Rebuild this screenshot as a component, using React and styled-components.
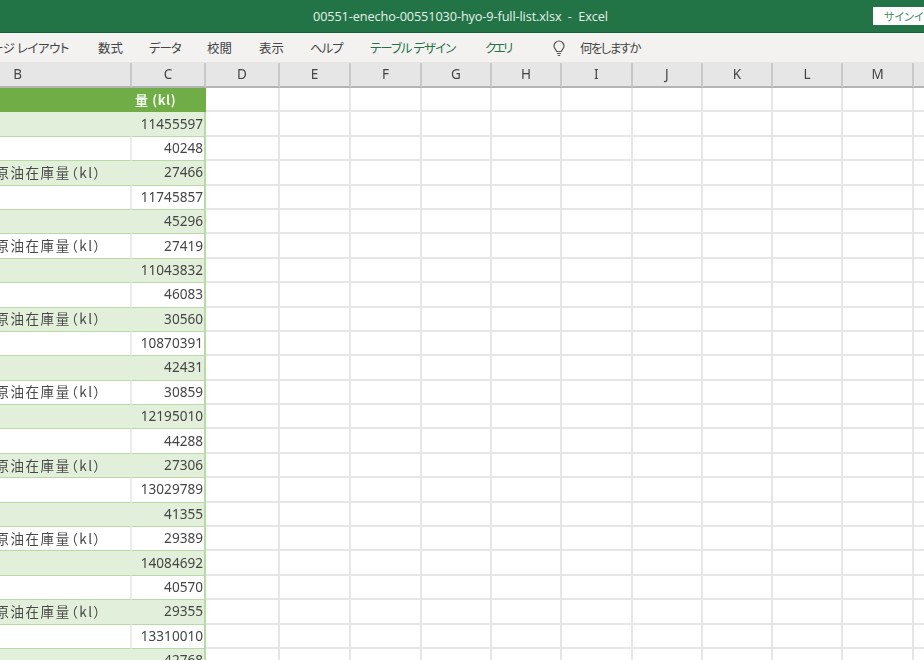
import React from "react";
import styled, { createGlobalStyle } from "styled-components";

const Global = createGlobalStyle`
  html, body { margin: 0; padding: 0; background: #fff; overflow: hidden; }
  body { font-family: "Noto Sans CJK JP", "Noto Sans", sans-serif; }
`;

const Page = styled.div`
  width: 924px;
  height: 660px;
  overflow: hidden;
  display: flex;
  flex-direction: column;
  filter: blur(0.45px);
`;

const TitleBar = styled.header`
  height: 33px;
  flex: none;
  box-sizing: border-box;
  background: #227447;
  border-bottom: 1px solid #0f6236;
  display: flex;
  align-items: center;
  color: #e6f0ea;
  font-family: "Open Sans", "Noto Sans", sans-serif;
  font-size: 12.7px;
  position: relative;
`;

const TitleText = styled.div`
  width: 100%;
  padding-left: 313px;
  box-sizing: border-box;
  white-space: pre;
  letter-spacing: -0.1px;
`;

const SignIn = styled.div`
  position: absolute;
  left: 873px;
  top: 7px;
  width: 70px;
  height: 18px;
  background: #fff;
  color: #4b8a68;
  font-size: 11px;
  font-feature-settings: "palt";
  line-height: 18px;
  padding-left: 11px;
  box-sizing: border-box;
  white-space: nowrap;
  font-family: "Noto Sans CJK JP", sans-serif;
`;

const Ribbon = styled.nav`
  height: 30px;
  flex: none;
  background: #f3f2f1;
  display: flex;
  align-items: center;
  overflow: hidden;
  font-size: 12.4px;
  font-feature-settings: "palt";
  color: #444;
  box-shadow: inset 0 -1px 0 #e6e5e3;
`;

const Tab = styled.span`
  flex: none;
  width: ${p => p.$w}px;
  color: ${p => (p.$green ? "#217346" : "#444")};
  letter-spacing: ${p => p.$track || 0}px;
  white-space: nowrap;
`;

const TabClip = styled.span`
  flex: none;
  width: 98px;
  display: flex;
  justify-content: flex-end;
  padding-right: 29px;
  box-sizing: border-box;
  letter-spacing: -0.4px;
  white-space: nowrap;
  overflow: hidden;
`;

const Bulb = styled.svg`
  flex: none;
  width: 14px;
  height: 17px;
  margin-right: 14px;
  fill: none;
  stroke: #555;
  stroke-width: 1.2;
`;

const Row = styled.div`
  display: grid;
  grid-template-columns: 132px 74px 74px 71px 71px 70px 70px 70.5px 70.5px 70px 70px 71px 70px;
  height: ${p => p.$h}px;
  flex: none;
`;

const ColHead = styled.div`
  box-sizing: border-box;
  background: #e6e6e6;
  border-right: 2px solid #c8c8c8;
  border-bottom: 2px solid #b4b4b4;
  color: #444;
  font-family: "Noto Sans", sans-serif;
  font-size: 13.5px;
  text-align: center;
  line-height: 23px;
`;

const ClippedHead = styled(ColHead)`
  text-align: right;
  padding-right: 108px;
`;

const Label = styled.div`
  box-sizing: border-box;
  background: ${p => (p.$tint ? "#e2efda" : "#fff")};
  border-bottom: 1.6px solid #b9d9a6;
  border-right: 2px solid ${p => (p.$tint ? "#e2efda" : "#ececec")};
  display: flex;
  justify-content: flex-end;
  align-items: center;
  overflow: hidden;
  white-space: nowrap;
  padding-right: 28px;
  padding-bottom: 2px;
  font-size: 13.5px;
  font-feature-settings: "palt";
  letter-spacing: 1.6px;
  color: #484848;
`;

const Amount = styled.div`
  box-sizing: border-box;
  background: ${p => (p.$tint ? "#e2efda" : "#fff")};
  border-bottom: 1.6px solid #b9d9a6;
  border-right: 2px solid #b9d9a6;
  display: flex;
  justify-content: flex-end;
  align-items: center;
  padding-right: 1px;
  padding-bottom: 2px;
  font-family: "Noto Sans", sans-serif;
  font-size: 13.6px;
  color: #454545;
`;

const HeadFill = styled.div`
  background: #70ad47;
`;

const HeadAmount = styled.div`
  background: #70ad47;
  color: #f3f8ee;
  font-size: 13px;
  font-weight: 700;
  letter-spacing: 0.6px;
  display: flex;
  align-items: center;
  padding-left: 3px;
  padding-bottom: 2px;
  white-space: nowrap;
`;

const Blank = styled.div`
  box-sizing: border-box;
  background: #fff;
  border-right: 2px solid #e6e6e6;
  border-bottom: 2px solid #e6e6e6;
`;

const Sheet = styled.main`
  flex: 1;
  min-height: 0;
  overflow: hidden;
  display: flex;
  flex-direction: column;
`;

const cols = ["C", "D", "E", "F", "G", "H", "I", "J", "K", "L", "M", "N"];
const blanks = cols.slice(1);
const values = [
  11455597, 40248, 27466, 11745857, 45296, 27419, 11043832, 46083, 30560, 10870391, 42431, 30859,
  12195010, 44288, 27306, 13029789, 41355, 29389, 14084692, 40570, 29355, 13310010, 42768,
];

export default function App() {
  return (
    <Page>
      <Global />
      <TitleBar>
        <TitleText>00551-enecho-00551030-hyo-9-full-list.xlsx  -  Excel</TitleText>
        <SignIn>サインイン</SignIn>
      </TitleBar>
      <Ribbon>
        <TabClip>ページ レイアウト</TabClip>
        <Tab $w={51}>数式</Tab>
        <Tab $w={58} $track={-1}>データ</Tab>
        <Tab $w={52}>校閲</Tab>
        <Tab $w={51}>表示</Tab>
        <Tab $w={60} $track={-1}>ヘルプ</Tab>
        <Tab $w={115} $green $track={-0.9}>テーブル デザイン</Tab>
        <Tab $w={67} $green $track={-2.4}>クエリ</Tab>
        <Bulb viewBox="0 0 14 17">
          <path d="M4.6 11.5C4.2 9.6 2 8.6 2 6a5 5 0 0 1 10 0c0 2.6-2.2 3.6-2.6 5.5z" />
          <path d="M5 13.5h4M5.8 15.5h2.4" />
        </Bulb>
        <Tab $w={80} $track={-1.5}>何をしますか</Tab>
      </Ribbon>
      <Sheet>
        <Row $h={25}>
          <ClippedHead>B</ClippedHead>
          {cols.map(c => (
            <ColHead key={c}>{c}</ColHead>
          ))}
        </Row>
        <Row $h={24.4}>
          <HeadFill />
          <HeadAmount>量 (kl)</HeadAmount>
          {blanks.map(c => (
            <Blank key={c} />
          ))}
        </Row>
        {values.map((v, i) => (
          <Row $h={24.4} key={i}>
            <Label $tint={i % 2 === 0}>{i % 3 === 2 ? "原油在庫量（kl）" : ""}</Label>
            <Amount $tint={i % 2 === 0}>{v}</Amount>
            {blanks.map(c => (
              <Blank key={c} />
            ))}
          </Row>
        ))}
      </Sheet>
    </Page>
  );
}
